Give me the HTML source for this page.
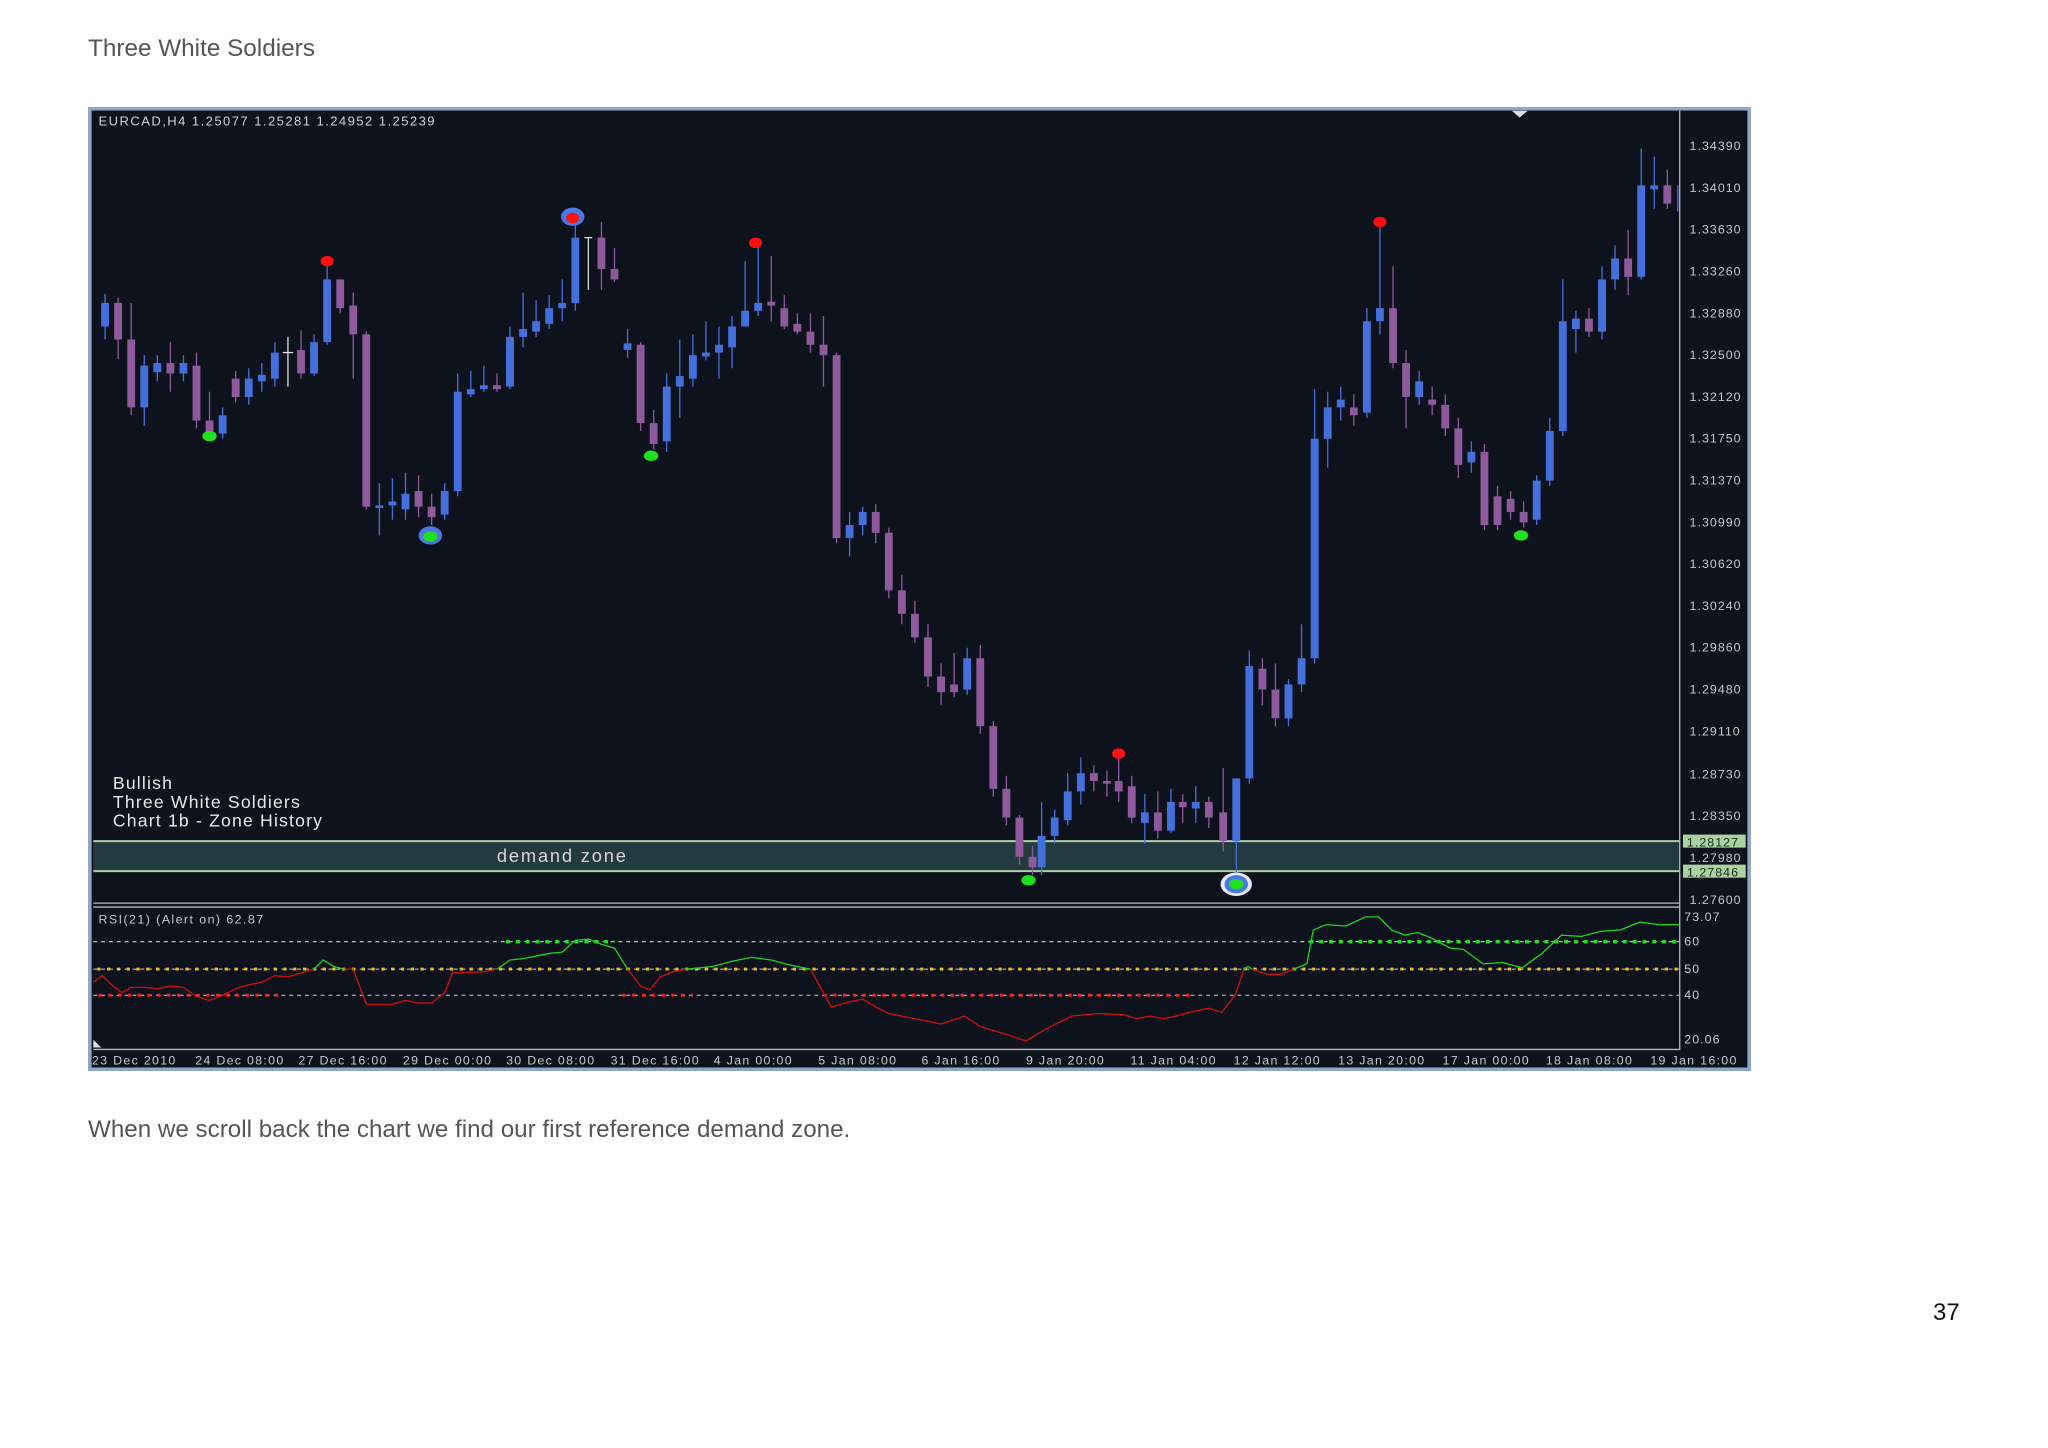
<!DOCTYPE html>
<html><head><meta charset="utf-8">
<style>
html,body{margin:0;padding:0;background:#fff;width:2048px;height:1448px;overflow:hidden;position:relative;font-family:"Liberation Sans",Arial,sans-serif}
.t{position:absolute;color:#555;white-space:nowrap}
#title{left:88px;top:35px;font-size:24.3px}
#cap{left:88px;top:1116px;font-size:24.2px}
#pg{left:1933px;top:1299px;font-size:24px;color:#111}
svg{position:absolute;left:87.5px;top:107px}
.b{fill:#4470dd}.bw{stroke:#4470dd;stroke-width:1}
.p{fill:#8e5a9c}.pw{stroke:#8e5a9c;stroke-width:1}
.ax{font-family:"Liberation Sans",sans-serif;font-size:9.5px;fill:#c8c8c8;letter-spacing:0.8px}
.dt{font-family:"Liberation Sans",sans-serif;font-size:9.5px;fill:#c8c8c8;letter-spacing:1px}
</style></head><body>
<div class="t" id="title">Three White Soldiers</div>
<svg width="1663" height="964" viewBox="67 82 1273 738">
<rect x="67" y="82" width="1273" height="738" fill="#0e121d"/>
<rect x="68.2" y="83.2" width="1270.6" height="735.6" fill="none" stroke="#8ea6c8" stroke-width="3"/>
<path d="M1157 85 l6 5 l6 -5z" fill="#ddd"/>
<rect x="71" y="644" width="1214" height="23" fill="#233a40"/>
<line x1="71" y1="644" x2="1285" y2="644" stroke="#a9d3a0" stroke-width="1.5"/>
<line x1="71" y1="667" x2="1285" y2="667" stroke="#a9d3a0" stroke-width="1.5"/>
<text x="380" y="660" font-family="Liberation Sans,sans-serif" font-size="14" fill="#d8d8d8" letter-spacing="1.4">demand zone</text>
<text font-family="Liberation Sans,sans-serif" font-size="13.5" fill="#e8e8e8" letter-spacing="0.9"><tspan x="86" y="604">Bullish</tspan><tspan x="86" y="618.5">Three White Soldiers</tspan><tspan x="86" y="633">Chart 1b - Zone History</tspan></text>
<text x="75" y="96" font-family="Liberation Sans,sans-serif" font-size="10" fill="#d0d0d0" letter-spacing="1.1">EURCAD,H4  1.25077 1.25281 1.24952 1.25239</text>
<g>
<line class="bw" x1="80" y1="225" x2="80" y2="260"/><rect class="b" x="77" y="232" width="6" height="18"/>
<line class="pw" x1="90" y1="228" x2="90" y2="275"/><rect class="p" x="87" y="232" width="6" height="28"/>
<line class="pw" x1="100" y1="232" x2="100" y2="318"/><rect class="p" x="97" y="260" width="6" height="52"/>
<line class="bw" x1="110" y1="272" x2="110" y2="326"/><rect class="b" x="107" y="280" width="6" height="32"/>
<line class="bw" x1="120" y1="272" x2="120" y2="292"/><rect class="b" x="117" y="278" width="6" height="7"/>
<line class="pw" x1="130" y1="262" x2="130" y2="300"/><rect class="p" x="127" y="278" width="6" height="8"/>
<line class="bw" x1="140" y1="272" x2="140" y2="292"/><rect class="b" x="137" y="278" width="6" height="8"/>
<line class="pw" x1="150" y1="270" x2="150" y2="328"/><rect class="p" x="147" y="280" width="6" height="42"/>
<line class="pw" x1="160" y1="300" x2="160" y2="334"/><rect class="p" x="157" y="322" width="6" height="10"/>
<line class="bw" x1="170" y1="312" x2="170" y2="336"/><rect class="b" x="167" y="318" width="6" height="14"/>
<line class="pw" x1="180" y1="284" x2="180" y2="308"/><rect class="p" x="177" y="290" width="6" height="14"/>
<line class="bw" x1="190" y1="282" x2="190" y2="310"/><rect class="b" x="187" y="290" width="6" height="14"/>
<line class="bw" x1="200" y1="278" x2="200" y2="300"/><rect class="b" x="197" y="287" width="6" height="5"/>
<line class="bw" x1="210" y1="262" x2="210" y2="296"/><rect class="b" x="207" y="270" width="6" height="20"/>
<line stroke="#ddd" x1="220" y1="258" x2="220" y2="296"/><line stroke="#ddd" x1="216" y1="270" x2="224" y2="270"/>
<line class="pw" x1="230" y1="253" x2="230" y2="290"/><rect class="p" x="227" y="268" width="6" height="18"/>
<line class="bw" x1="240" y1="256" x2="240" y2="288"/><rect class="b" x="237" y="262" width="6" height="24"/>
<line class="bw" x1="250" y1="200" x2="250" y2="264"/><rect class="b" x="247" y="214" width="6" height="48"/>
<line class="pw" x1="260" y1="214" x2="260" y2="240"/><rect class="p" x="257" y="214" width="6" height="22"/>
<line class="pw" x1="270" y1="224" x2="270" y2="290"/><rect class="p" x="267" y="234" width="6" height="22"/>
<line class="pw" x1="280" y1="254" x2="280" y2="390"/><rect class="p" x="277" y="256" width="6" height="132"/>
<line class="bw" x1="290" y1="370" x2="290" y2="410"/><rect class="b" x="287" y="387" width="6" height="2"/>
<line class="bw" x1="300" y1="366" x2="300" y2="398"/><rect class="b" x="297" y="384" width="6" height="3"/>
<line class="bw" x1="310" y1="362" x2="310" y2="398"/><rect class="b" x="307" y="378" width="6" height="12"/>
<line class="pw" x1="320" y1="364" x2="320" y2="396"/><rect class="p" x="317" y="376" width="6" height="12"/>
<line class="pw" x1="330" y1="378" x2="330" y2="402"/><rect class="p" x="327" y="388" width="6" height="8"/>
<line class="bw" x1="340" y1="370" x2="340" y2="398"/><rect class="b" x="337" y="376" width="6" height="18"/>
<line class="bw" x1="350" y1="286" x2="350" y2="380"/><rect class="b" x="347" y="300" width="6" height="76"/>
<line class="bw" x1="360" y1="284" x2="360" y2="304"/><rect class="b" x="357" y="298" width="6" height="4"/>
<line class="bw" x1="370" y1="280" x2="370" y2="300"/><rect class="b" x="367" y="295" width="6" height="3"/>
<line class="pw" x1="380" y1="286" x2="380" y2="300"/><rect class="p" x="377" y="295" width="6" height="3"/>
<line class="bw" x1="390" y1="250" x2="390" y2="298"/><rect class="b" x="387" y="258" width="6" height="38"/>
<line class="bw" x1="400" y1="224" x2="400" y2="266"/><rect class="b" x="397" y="252" width="6" height="6"/>
<line class="bw" x1="410" y1="230" x2="410" y2="258"/><rect class="b" x="407" y="246" width="6" height="8"/>
<line class="bw" x1="420" y1="226" x2="420" y2="252"/><rect class="b" x="417" y="236" width="6" height="12"/>
<line class="bw" x1="430" y1="214" x2="430" y2="246"/><rect class="b" x="427" y="232" width="6" height="4"/>
<line class="bw" x1="440" y1="172" x2="440" y2="238"/><rect class="b" x="437" y="182" width="6" height="50"/>
<line stroke="#ddd" x1="450" y1="182" x2="450" y2="222"/><line stroke="#ddd" x1="447" y1="182" x2="453" y2="182"/>
<line class="pw" x1="460" y1="170" x2="460" y2="222"/><rect class="p" x="457" y="182" width="6" height="24"/>
<line class="pw" x1="470" y1="190" x2="470" y2="216"/><rect class="p" x="467" y="206" width="6" height="8"/>
<line class="bw" x1="480" y1="252" x2="480" y2="274"/><rect class="b" x="477" y="263" width="6" height="5"/>
<line class="pw" x1="490" y1="262" x2="490" y2="330"/><rect class="p" x="487" y="264" width="6" height="60"/>
<line class="pw" x1="500" y1="314" x2="500" y2="344"/><rect class="p" x="497" y="324" width="6" height="16"/>
<line class="bw" x1="510" y1="286" x2="510" y2="346"/><rect class="b" x="507" y="296" width="6" height="42"/>
<line class="bw" x1="520" y1="260" x2="520" y2="320"/><rect class="b" x="517" y="288" width="6" height="8"/>
<line class="bw" x1="530" y1="256" x2="530" y2="296"/><rect class="b" x="527" y="272" width="6" height="18"/>
<line class="bw" x1="540" y1="246" x2="540" y2="276"/><rect class="b" x="537" y="270" width="6" height="3"/>
<line class="bw" x1="550" y1="250" x2="550" y2="290"/><rect class="b" x="547" y="264" width="6" height="6"/>
<line class="bw" x1="560" y1="242" x2="560" y2="282"/><rect class="b" x="557" y="250" width="6" height="16"/>
<line class="bw" x1="570" y1="200" x2="570" y2="250"/><rect class="b" x="567" y="238" width="6" height="12"/>
<line class="bw" x1="580" y1="188" x2="580" y2="242"/><rect class="b" x="577" y="232" width="6" height="6"/>
<line class="pw" x1="590" y1="196" x2="590" y2="246"/><rect class="p" x="587" y="231" width="6" height="3"/>
<line class="pw" x1="600" y1="226" x2="600" y2="252"/><rect class="p" x="597" y="236" width="6" height="14"/>
<line class="pw" x1="610" y1="240" x2="610" y2="256"/><rect class="p" x="607" y="248" width="6" height="6"/>
<line class="pw" x1="620" y1="240" x2="620" y2="270"/><rect class="p" x="617" y="254" width="6" height="10"/>
<line class="pw" x1="630" y1="242" x2="630" y2="296"/><rect class="p" x="627" y="264" width="6" height="8"/>
<line class="pw" x1="640" y1="270" x2="640" y2="416"/><rect class="p" x="637" y="272" width="6" height="140"/>
<line class="bw" x1="650" y1="392" x2="650" y2="426"/><rect class="b" x="647" y="402" width="6" height="10"/>
<line class="bw" x1="660" y1="388" x2="660" y2="410"/><rect class="b" x="657" y="392" width="6" height="10"/>
<line class="pw" x1="670" y1="386" x2="670" y2="416"/><rect class="p" x="667" y="392" width="6" height="16"/>
<line class="pw" x1="680" y1="404" x2="680" y2="458"/><rect class="p" x="677" y="408" width="6" height="44"/>
<line class="pw" x1="690" y1="440" x2="690" y2="478"/><rect class="p" x="687" y="452" width="6" height="18"/>
<line class="pw" x1="700" y1="460" x2="700" y2="492"/><rect class="p" x="697" y="470" width="6" height="18"/>
<line class="pw" x1="710" y1="478" x2="710" y2="526"/><rect class="p" x="707" y="488" width="6" height="30"/>
<line class="pw" x1="720" y1="508" x2="720" y2="540"/><rect class="p" x="717" y="518" width="6" height="12"/>
<line class="pw" x1="730" y1="500" x2="730" y2="534"/><rect class="p" x="727" y="524" width="6" height="6"/>
<line class="bw" x1="740" y1="496" x2="740" y2="532"/><rect class="b" x="737" y="504" width="6" height="24"/>
<line class="pw" x1="750" y1="494" x2="750" y2="562"/><rect class="p" x="747" y="504" width="6" height="52"/>
<line class="pw" x1="760" y1="552" x2="760" y2="610"/><rect class="p" x="757" y="556" width="6" height="48"/>
<line class="pw" x1="770" y1="594" x2="770" y2="632"/><rect class="p" x="767" y="604" width="6" height="22"/>
<line class="pw" x1="780" y1="624" x2="780" y2="662"/><rect class="p" x="777" y="626" width="6" height="30"/>
<line class="pw" x1="790" y1="648" x2="790" y2="670"/><rect class="p" x="787" y="656" width="6" height="8"/>
<line class="bw" x1="797" y1="614" x2="797" y2="670"/><rect class="b" x="794" y="640" width="6" height="24"/>
<line class="bw" x1="807" y1="620" x2="807" y2="646"/><rect class="b" x="804" y="626" width="6" height="14"/>
<line class="bw" x1="817" y1="592" x2="817" y2="632"/><rect class="b" x="814" y="606" width="6" height="22"/>
<line class="bw" x1="827" y1="580" x2="827" y2="616"/><rect class="b" x="824" y="592" width="6" height="14"/>
<line class="pw" x1="837" y1="586" x2="837" y2="606"/><rect class="p" x="834" y="592" width="6" height="6"/>
<line class="pw" x1="847" y1="590" x2="847" y2="610"/><rect class="p" x="844" y="598" width="6" height="2"/>
<line class="pw" x1="856" y1="580" x2="856" y2="614"/><rect class="p" x="853" y="598" width="6" height="8"/>
<line class="pw" x1="866" y1="594" x2="866" y2="630"/><rect class="p" x="863" y="602" width="6" height="24"/>
<line class="bw" x1="876" y1="608" x2="876" y2="646"/><rect class="b" x="873" y="622" width="6" height="8"/>
<line class="pw" x1="886" y1="606" x2="886" y2="642"/><rect class="p" x="883" y="622" width="6" height="14"/>
<line class="bw" x1="896" y1="604" x2="896" y2="638"/><rect class="b" x="893" y="614" width="6" height="22"/>
<line class="pw" x1="905" y1="608" x2="905" y2="630"/><rect class="p" x="902" y="614" width="6" height="4"/>
<line class="bw" x1="915" y1="602" x2="915" y2="630"/><rect class="b" x="912" y="614" width="6" height="5"/>
<line class="pw" x1="925" y1="610" x2="925" y2="634"/><rect class="p" x="922" y="614" width="6" height="12"/>
<line class="pw" x1="936" y1="588" x2="936" y2="652"/><rect class="p" x="933" y="622" width="6" height="22"/>
<line class="bw" x1="946" y1="596" x2="946" y2="670"/><rect class="b" x="943" y="596" width="6" height="48"/>
<line class="bw" x1="956" y1="498" x2="956" y2="600"/><rect class="b" x="953" y="510" width="6" height="86"/>
<line class="pw" x1="966" y1="504" x2="966" y2="540"/><rect class="p" x="963" y="512" width="6" height="16"/>
<line class="pw" x1="976" y1="508" x2="976" y2="556"/><rect class="p" x="973" y="528" width="6" height="22"/>
<line class="bw" x1="986" y1="520" x2="986" y2="556"/><rect class="b" x="983" y="524" width="6" height="26"/>
<line class="bw" x1="996" y1="478" x2="996" y2="530"/><rect class="b" x="993" y="504" width="6" height="20"/>
<line class="bw" x1="1006" y1="298" x2="1006" y2="508"/><rect class="b" x="1003" y="336" width="6" height="168"/>
<line class="bw" x1="1016" y1="300" x2="1016" y2="358"/><rect class="b" x="1013" y="312" width="6" height="24"/>
<line class="bw" x1="1026" y1="296" x2="1026" y2="322"/><rect class="b" x="1023" y="306" width="6" height="6"/>
<line class="pw" x1="1036" y1="302" x2="1036" y2="326"/><rect class="p" x="1033" y="312" width="6" height="6"/>
<line class="bw" x1="1046" y1="236" x2="1046" y2="320"/><rect class="b" x="1043" y="246" width="6" height="70"/>
<line class="bw" x1="1056" y1="172" x2="1056" y2="256"/><rect class="b" x="1053" y="236" width="6" height="10"/>
<line class="pw" x1="1066" y1="204" x2="1066" y2="282"/><rect class="p" x="1063" y="236" width="6" height="42"/>
<line class="pw" x1="1076" y1="268" x2="1076" y2="328"/><rect class="p" x="1073" y="278" width="6" height="26"/>
<line class="bw" x1="1086" y1="284" x2="1086" y2="310"/><rect class="b" x="1083" y="292" width="6" height="12"/>
<line class="pw" x1="1096" y1="296" x2="1096" y2="318"/><rect class="p" x="1093" y="306" width="6" height="4"/>
<line class="pw" x1="1106" y1="302" x2="1106" y2="334"/><rect class="p" x="1103" y="310" width="6" height="18"/>
<line class="pw" x1="1116" y1="320" x2="1116" y2="366"/><rect class="p" x="1113" y="328" width="6" height="28"/>
<line class="bw" x1="1126" y1="338" x2="1126" y2="362"/><rect class="b" x="1123" y="346" width="6" height="8"/>
<line class="pw" x1="1136" y1="340" x2="1136" y2="406"/><rect class="p" x="1133" y="346" width="6" height="56"/>
<line class="pw" x1="1146" y1="372" x2="1146" y2="406"/><rect class="p" x="1143" y="380" width="6" height="22"/>
<line class="pw" x1="1156" y1="376" x2="1156" y2="398"/><rect class="p" x="1153" y="382" width="6" height="10"/>
<line class="pw" x1="1166" y1="384" x2="1166" y2="404"/><rect class="p" x="1163" y="392" width="6" height="8"/>
<line class="bw" x1="1176" y1="364" x2="1176" y2="402"/><rect class="b" x="1173" y="368" width="6" height="30"/>
<line class="bw" x1="1186" y1="320" x2="1186" y2="372"/><rect class="b" x="1183" y="330" width="6" height="38"/>
<line class="bw" x1="1196" y1="214" x2="1196" y2="334"/><rect class="b" x="1193" y="246" width="6" height="84"/>
<line class="bw" x1="1206" y1="238" x2="1206" y2="270"/><rect class="b" x="1203" y="244" width="6" height="8"/>
<line class="pw" x1="1216" y1="236" x2="1216" y2="258"/><rect class="p" x="1213" y="244" width="6" height="10"/>
<line class="bw" x1="1226" y1="204" x2="1226" y2="260"/><rect class="b" x="1223" y="214" width="6" height="40"/>
<line class="bw" x1="1236" y1="188" x2="1236" y2="222"/><rect class="b" x="1233" y="198" width="6" height="16"/>
<line class="pw" x1="1246" y1="176" x2="1246" y2="226"/><rect class="p" x="1243" y="198" width="6" height="14"/>
<line class="bw" x1="1256" y1="114" x2="1256" y2="214"/><rect class="b" x="1253" y="142" width="6" height="70"/>
<line class="bw" x1="1266" y1="120" x2="1266" y2="160"/><rect class="b" x="1263" y="142" width="6" height="3"/>
<line class="pw" x1="1276" y1="130" x2="1276" y2="160"/><rect class="p" x="1273" y="142" width="6" height="14"/>
<line class="bw" x1="1284" y1="142" x2="1284" y2="162"/>
</g>
<g fill="#ff1010">
<ellipse cx="250" cy="200" rx="5" ry="4"/><ellipse cx="578" cy="186" rx="5" ry="4"/><ellipse cx="856" cy="577" rx="5" ry="4"/><ellipse cx="1056" cy="170" rx="5" ry="4"/>
</g>
<ellipse cx="438" cy="166" rx="9" ry="7" fill="#4a78e0"/><ellipse cx="438" cy="167" rx="5" ry="4" fill="#ff1010"/>
<ellipse cx="329" cy="410" rx="9" ry="7" fill="#4a78e0"/>
<ellipse cx="946" cy="677" rx="12" ry="9" fill="#e8e8ff"/><ellipse cx="946" cy="677" rx="9" ry="7" fill="#4a78e0"/>
<g fill="#20e020">
<ellipse cx="160" cy="334" rx="5.5" ry="4"/><ellipse cx="329" cy="411" rx="5.5" ry="4"/><ellipse cx="498" cy="349" rx="5.5" ry="4"/><ellipse cx="787" cy="674" rx="5.5" ry="4"/><ellipse cx="946" cy="677" rx="5.5" ry="4"/><ellipse cx="1164" cy="410" rx="5.5" ry="4"/>
</g>
<line x1="1285.5" y1="85" x2="1285.5" y2="804" stroke="#b8b8b8" stroke-width="1"/>
<line x1="71" y1="691.5" x2="1285" y2="691.5" stroke="#b8b8b8" stroke-width="1"/>
<line x1="71" y1="694.5" x2="1285" y2="694.5" stroke="#b8b8b8" stroke-width="1"/>
<line x1="71" y1="803.5" x2="1285" y2="803.5" stroke="#b8b8b8" stroke-width="1"/>
<g class="ax">
<text x="1293" y="115">1.34390</text><text x="1293" y="147">1.34010</text><text x="1293" y="179">1.33630</text><text x="1293" y="211">1.33260</text><text x="1293" y="243">1.32880</text><text x="1293" y="275">1.32500</text><text x="1293" y="307">1.32120</text><text x="1293" y="339">1.31750</text><text x="1293" y="371">1.31370</text><text x="1293" y="403">1.30990</text><text x="1293" y="435">1.30620</text><text x="1293" y="467">1.30240</text><text x="1293" y="499">1.29860</text><text x="1293" y="531">1.29480</text><text x="1293" y="563">1.29110</text><text x="1293" y="596">1.28730</text><text x="1293" y="628">1.28350</text>
<text x="1293" y="660">1.27980</text><text x="1293" y="692">1.27600</text>
</g>
<rect x="1288" y="639" width="48" height="10" fill="#a9d3a0"/><text x="1291" y="648" class="ax" style="fill:#1a2a1a">1.28127</text>
<rect x="1288" y="662" width="48" height="10" fill="#a9d3a0"/><text x="1291" y="671" class="ax" style="fill:#1a2a1a">1.27846</text>
<text x="75" y="707" class="ax" style="letter-spacing:1.1px">RSI(21) (Alert on) 62.87</text>
<g class="ax"><text x="1289" y="705">73.07</text><text x="1289" y="724">60</text><text x="1289" y="745">50</text><text x="1289" y="765">40</text><text x="1289" y="799">20.06</text></g>
<line x1="71" y1="721" x2="1285" y2="721" stroke="#ccc" stroke-width="0.8" stroke-dasharray="3,3"/>
<line x1="71" y1="742" x2="1285" y2="742" stroke="#ccc" stroke-width="0.8" stroke-dasharray="3,3"/>
<line x1="71" y1="762" x2="1285" y2="762" stroke="#ccc" stroke-width="0.8" stroke-dasharray="3,3"/>
<line x1="74" y1="742" x2="1285" y2="742" stroke="#e8c020" stroke-width="2.2" stroke-dasharray="2.5,5"/>
<line x1="387" y1="721" x2="470" y2="721" stroke="#20e020" stroke-width="2.5" stroke-dasharray="3,4.5"/>
<line x1="1002" y1="721" x2="1285" y2="721" stroke="#20e020" stroke-width="2.5" stroke-dasharray="3,4.5"/>
<line x1="75" y1="762" x2="215" y2="762" stroke="#ff2020" stroke-width="2.2" stroke-dasharray="2.5,5"/>
<line x1="476" y1="762" x2="530" y2="762" stroke="#ff2020" stroke-width="2.2" stroke-dasharray="2.5,5"/>
<line x1="630" y1="762" x2="910" y2="762" stroke="#ff2020" stroke-width="2.2" stroke-dasharray="2.5,5"/>
<g fill="none" stroke-width="1">
<polyline stroke="#d01010" points="71,752 78,747 86,755 93,760 100,756 110,756 120,757 130,755 140,756 150,763 160,766 170,762 180,757 190,754 200,752 210,747 220,748 230,745 240,742"/>
<polyline stroke="#20d020" points="240,742 247,735 255,740 263,742"/>
<polyline stroke="#d01010" points="263,742 270,742 280,769 300,769 310,766 320,768 330,768 340,760 346,745 370,744 380,742"/>
<polyline stroke="#20d020" points="380,742 390,735 400,734 410,732 420,730 430,729 440,720 450,719 460,723 470,726 480,742"/>
<polyline stroke="#d01010" points="480,742 490,755 497,758 505,748 515,744 525,742"/>
<polyline stroke="#20d020" points="525,742 545,740 560,736 575,733 590,735 605,739 620,742"/>
<polyline stroke="#d01010" points="620,742 636,771 650,767 660,765 670,771 680,776 700,780 720,784 738,778 750,786 770,792 785,797 800,788 820,778 840,776 860,777 870,780 880,778 890,780 900,778 910,775 925,772 935,775 945,762 952,742"/>
<polyline stroke="#d01010" points="958,742 970,746 980,746 990,742"/>
<polyline stroke="#20d020" points="952,742 955,740 958,742"/>
<polyline stroke="#20d020" points="990,742 1000,738 1005,712 1015,708 1030,709 1045,702 1055,702 1065,712 1075,716 1085,714 1095,718 1110,726 1120,727 1135,738 1150,737 1165,741 1180,730 1195,716 1210,717 1225,713 1240,712 1255,706 1270,708 1285,708"/>
</g>
<path d="M71 796 l6 6 h-6z" fill="#ddd"/>
<g class="dt">
<text x="70" y="815">23 Dec 2010</text><text x="149" y="815">24 Dec 08:00</text><text x="228" y="815">27 Dec 16:00</text><text x="308" y="815">29 Dec 00:00</text><text x="387" y="815">30 Dec 08:00</text><text x="467" y="815">31 Dec 16:00</text><text x="546" y="815">4 Jan 00:00</text><text x="626" y="815">5 Jan 08:00</text><text x="705" y="815">6 Jan 16:00</text><text x="785" y="815">9 Jan 20:00</text><text x="865" y="815">11 Jan 04:00</text><text x="944" y="815">12 Jan 12:00</text><text x="1024" y="815">13 Jan 20:00</text><text x="1104" y="815">17 Jan 00:00</text><text x="1183" y="815">18 Jan 08:00</text><text x="1263" y="815">19 Jan 16:00</text>
</g>
</svg>
<div class="t" id="cap">When we scroll back the chart we find our first reference demand zone.</div>
<div class="t" id="pg">37</div>
</body></html>
